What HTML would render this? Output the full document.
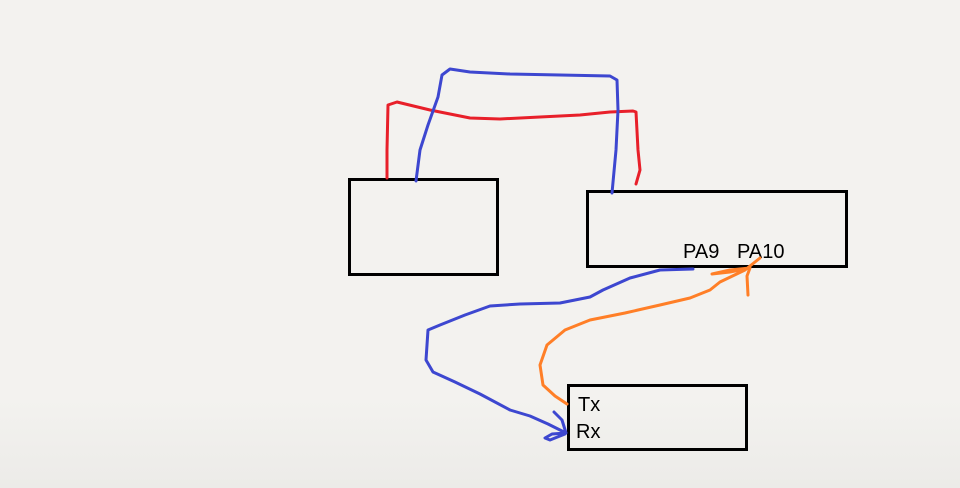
<!DOCTYPE html>
<html><head><meta charset="utf-8"><style>
html,body{margin:0;padding:0}
body{width:960px;height:488px;overflow:hidden;background:linear-gradient(#f3f2ef 0,#f3f2ef 400px,#ecebe8 488px);position:relative;font-family:"Liberation Sans",sans-serif}
.b{position:absolute;border:3px solid #000;box-sizing:border-box}
.t{position:absolute;font-size:20px;color:#000;line-height:1}
svg{position:absolute;left:0;top:0}
</style></head><body>
<div class="b" style="left:348px;top:178px;width:151px;height:98px"></div>
<div class="b" style="left:586px;top:190px;width:262px;height:78px"></div>
<div class="b" style="left:567px;top:384px;width:181px;height:67px"></div>
<div class="t" style="left:683px;top:242px">PA9</div>
<div class="t" style="left:737px;top:242px">PA10</div>
<div class="t" style="left:578px;top:395px">Tx</div>
<div class="t" style="left:576px;top:422px">Rx</div>
<svg width="960" height="488" fill="none" stroke-linecap="round" stroke-linejoin="round" stroke-width="3">
<path stroke="#e8202a" d="M387,178 L387,150 L388,105 L397,102 L430,110 L470,118 L500,119 L540,117 L580,115 L610,112 L633,111 L636,112 L638,150 L640,170 L636,184"/>
<path stroke="#3d47d0" d="M416,181 L420,150 L428,125 L438,97 L442,75 L450,69 L470,72 L510,74 L560,75 L610,76 L617,80 L618,110 L616,150 L612,193"/>
<path stroke="#3d47d0" d="M693,269 L660,270 L630,278 L603,290 L590,297 L560,303 L520,304 L490,306 L465,315 L440,325 L428,330 L426,360 L433,372 L455,382 L480,394 L510,410 L530,416 L548,424 L566,433 M554,412 L562,420 L566,433 L552,434 L545,438 L550,440 L565,434"/>
<path stroke="#ff7f27" d="M567,404 L555,396 L543,385 L540,365 L547,345 L565,330 L590,320 L625,313 L660,305 L690,298 L710,290 L720,282 L745,270 L760,258 M750,268 L730,270 L712,274 L730,272 L750,268 L747,276 L748,295"/>
</svg>
</body></html>
